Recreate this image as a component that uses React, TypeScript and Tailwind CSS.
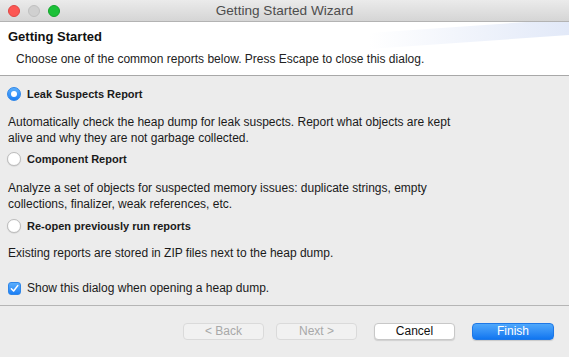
import React from "react";

const font = { fontFamily: '"Liberation Sans", Arial, Helvetica, sans-serif' };

function Radio({ checked }: { checked?: boolean }) {
  if (checked) {
    return (
      <span className="w-[14px] h-[14px] rounded-full bg-gradient-to-b from-[#5aaefc] to-[#1a7ff5] border border-[#2f86e8] flex items-center justify-center shrink-0">
        <span className="w-[6px] h-[6px] rounded-full bg-white" />
      </span>
    );
  }
  return <span className="w-[14px] h-[14px] rounded-full bg-white border border-[#bdbdbd] shadow-[0_0.5px_1px_rgba(0,0,0,0.15)] shrink-0" />;
}

function Checkbox() {
  return (
    <span className="w-[13px] h-[13px] rounded-[3px] bg-gradient-to-b from-[#5aaefc] to-[#1a7ff5] border border-[#2f86e8] flex items-center justify-center shrink-0">
      <svg width="9" height="9" viewBox="0 0 10 10">
        <path d="M1.5 5.3 L4 7.8 L8.6 1.8" fill="none" stroke="white" strokeWidth="1.7" strokeLinecap="round" strokeLinejoin="round" />
      </svg>
    </span>
  );
}

export default function App() {
  return (
    <div className="w-[569px] h-[357px] flex flex-col bg-[#ececec] text-[12px] text-[#1a1a1a] overflow-hidden" style={font}>
      {/* Title bar */}
      <div className="h-[22px] shrink-0 relative flex items-center justify-center bg-gradient-to-b from-[#ebebeb] to-[#d5d5d5] border-b border-[#b3b3b3]">
        <div className="absolute left-[8px] top-[5px] flex gap-[8px]">
          <span className="w-[12px] h-[12px] rounded-full bg-[#fc5753] border border-[#df4744]" />
          <span className="w-[12px] h-[12px] rounded-full bg-[#d0d0d0] border border-[#c0c0c0]" />
          <span className="w-[12px] h-[12px] rounded-full bg-[#1bc138] border border-[#12a42b]" />
        </div>
        <span className="text-[#4d4d4d] leading-[16px] text-[13.6px]">Getting Started Wizard</span>
      </div>

      {/* Header */}
      <div className="h-[54px] shrink-0 bg-white border-b border-[#a8a8a8] relative overflow-hidden">
        <div className="absolute right-0 top-[4px] w-[200px] h-[16px] bg-gradient-to-r from-white to-[#e2e9f8] skew-y-[-4deg]" />
        <div className="relative pl-[8px] pt-[7px]">
          <div className="font-bold leading-[16px] text-[13px] text-[#111]">Getting Started</div>
          <div className="pl-[8px] mt-[6px] leading-[16px] text-[#222]">Choose one of the common reports below. Press Escape to close this dialog.</div>
        </div>
      </div>

      {/* Content */}
      <div className="flex-1 flex flex-col px-[7px] pt-[10px] border-b border-[#b5b5b5]">
        <div className="flex items-center gap-[6px] h-[16px]">
          <Radio checked />
          <span className="font-bold leading-[16px] text-[11px]">Leak Suspects Report</span>
        </div>
        <div className="mt-[12px] leading-[16px] pl-[1px]">
          Automatically check the heap dump for leak suspects. Report what objects are kept<br />
          alive and why they are not garbage collected.
        </div>
        <div className="flex items-center gap-[6px] h-[16px] mt-[5px]">
          <Radio />
          <span className="font-bold leading-[16px] text-[11px]">Component Report</span>
        </div>
        <div className="mt-[13px] leading-[16px] pl-[1px]">
          Analyze a set of objects for suspected memory issues: duplicate strings, empty<br />
          collections, finalizer, weak references, etc.
        </div>
        <div className="flex items-center gap-[6px] h-[16px] mt-[6px]">
          <Radio />
          <span className="font-bold leading-[16px] text-[11px]">Re-open previously run reports</span>
        </div>
        <div className="mt-[11px] leading-[16px] pl-[1px]">
          Existing reports are stored in ZIP files next to the heap dump.
        </div>
        <div className="flex items-center gap-[6px] h-[16px] mt-[19px] pl-[1px]">
          <Checkbox />
          <span className="leading-[16px]">Show this dialog when opening a heap dump.</span>
        </div>
      </div>

      {/* Footer */}
      <div className="h-[51px] shrink-0 flex items-start pt-[17px] pl-[183px]">
        <button className="w-[81px] h-[17px] rounded-[4px] bg-[#f1f1f1] border border-[#dadada] text-[#a8a8a8] leading-[15px] text-[12px]">&lt; Back</button>
        <button className="ml-[12px] w-[81px] h-[17px] rounded-[4px] bg-[#f1f1f1] border border-[#dadada] text-[#a8a8a8] leading-[15px] text-[12px]">Next &gt;</button>
        <button className="ml-[17px] w-[81px] h-[17px] rounded-[4px] bg-white border border-[#c8c8c8] shadow-[0_1px_1px_rgba(0,0,0,0.12)] text-[#111] leading-[15px] text-[12px]">Cancel</button>
        <button className="ml-[17px] w-[82px] h-[17px] rounded-[4px] bg-gradient-to-b from-[#4fa8fb] to-[#0f76f0] border border-[#1f78e6] shadow-[0_1px_1px_rgba(0,0,0,0.15)] text-white leading-[15px] text-[12px]">Finish</button>
      </div>
    </div>
  );
}
